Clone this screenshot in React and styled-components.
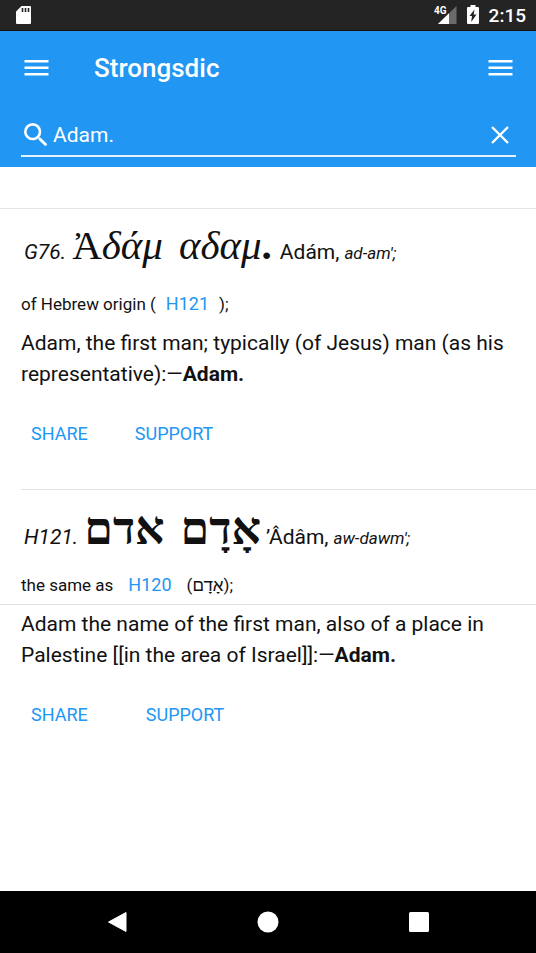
import React, { useState } from "react";
import styled, { createGlobalStyle } from "styled-components";

const BLUE = "#2196f3";
const INK = "#111";

const GlobalStyle = createGlobalStyle`
  * { box-sizing: border-box; }
  body { margin: 0; background: #fff; color: ${INK}; font-family: Roboto, sans-serif; }
  button, input { font-family: inherit; }
`;

const Screen = styled.div`
  display: flex;
  flex-direction: column;
  min-height: 100vh;
`;

const StatusBar = styled.div`
  display: flex;
  align-items: center;
  justify-content: space-between;
  height: 31px;
  padding: 0 10px 0 15px;
  background: #242424;
  border-bottom: 1px solid #1a1210;
  color: #fff;
`;

const StatusGroup = styled.div`
  display: flex;
  align-items: center;
  gap: 10px;
`;

const Clock = styled.time`
  font-size: 19px;
  font-weight: 500;
  line-height: 31px;
`;

const Header = styled.header`
  background: ${BLUE};
  color: #fff;
  padding-bottom: 10px;
`;

const Toolbar = styled.div`
  display: flex;
  align-items: center;
  height: 74px;
  padding: 0 23px 0 24px;
`;

const Title = styled.h1`
  flex: 1;
  margin: 0 0 0 45px;
  font-size: 26px;
  font-weight: 500;
  line-height: 32px;
`;

const IconButton = styled.button`
  display: flex;
  padding: 0;
  border: 0;
  background: none;
  color: inherit;
  cursor: pointer;
`;

const SearchField = styled.label`
  display: flex;
  align-items: center;
  height: 52px;
  margin: 0 20px 0 21px;
  padding: 10px 6px 0 3px;
  border-bottom: 2px solid #e4f2fe;
`;

const SearchInput = styled.input`
  flex: 1;
  min-width: 0;
  margin-left: 5px;
  padding: 0;
  border: 0;
  outline: 0;
  background: none;
  color: #fff;
  font-size: 21px;
  line-height: 32px;
`;

const Results = styled.main`
  flex: 1;
  margin-top: 41px;
  border-top: 1px solid #e6e6e6;
`;

const Entry = styled.article`
  padding-bottom: 32px;

  & + & { position: relative; }
  & + &::before {
    content: "";
    position: absolute;
    inset: 0 0 auto 21px;
    border-top: 1px solid #e2e2e2;
  }
`;

const HeadLine = styled.h2`
  display: flex;
  align-items: baseline;
  height: ${({ $script }) => ($script === "hebrew" ? 81 : 80)}px;
  margin: 0;
  padding: ${({ $script }) => ($script === "hebrew" ? 9 : 6)}px 20px 0 24px;
  font-size: 21px;
  font-weight: 400;
  line-height: 60px;
  white-space: nowrap;
`;

const Code = styled.em`
  margin-right: 6px;
`;

const GreekWords = styled.span`
  display: flex;
  align-items: baseline;
  gap: 16px;
  margin-right: 8px;
  font: italic 41px/60px "Liberation Serif", serif;
`;

const Capital = styled.span`
  font-style: normal;
`;

const Stop = styled.b`
  font-style: normal;
`;

const HebrewWords = styled.span`
  display: flex;
  gap: 16px;
  margin-right: 5px;
  font: bold 46px/62px "Liberation Serif", serif;
`;

const Pronunciation = styled.em`
  margin-left: 5px;
  font-size: 17px;
`;

const Origin = styled.p`
  height: 35px;
  margin: 0 0 4px;
  padding: 0 21px;
  border-bottom: 1px solid ${({ $ruled }) => ($ruled ? "#e2e2e2" : "transparent")};
  font-size: 17px;
  line-height: 30px;
`;

const Reference = styled.a`
  margin: 0 ${({ $gap }) => $gap}px;
  color: ${BLUE};
  font-size: 18px;
  text-decoration: none;
`;

const Definition = styled.p`
  margin: 0;
  padding: 0 21px;
  font-size: 21px;
  line-height: 31px;
`;

const Actions = styled.div`
  display: flex;
  gap: ${({ $gap }) => $gap}px;
  margin-top: 19px;
  padding: 0 31px;
`;

const ActionButton = styled.button`
  height: 48px;
  padding: 0;
  border: 0;
  background: none;
  color: ${BLUE};
  font-size: 18px;
  cursor: pointer;
`;

const NavBar = styled.nav`
  display: grid;
  grid-template-columns: repeat(3, 151px);
  justify-content: center;
  justify-items: center;
  align-items: center;
  height: 62px;
  background: #000;
  color: #fff;
`;

const MenuIcon = () => (
  <svg width="25" height="18" viewBox="0 0 25 18" fill="currentColor" aria-hidden="true">
    <path d="M0.500 1h24v2.500h-24zM0.500 7.500h24V10h-24zM0.500 14h24v2.500h-24z" />
  </svg>
);

const SearchIcon = () => (
  <svg width="24" height="24" viewBox="3 3 18 18" fill="currentColor" aria-hidden="true">
    <path d="M15.500 14h-.79l-.28-.27A6.471 6.471 0 0 0 16 9.500 6.500 6.500 0 1 0 9.500 16c1.610 0 3.090-.59 4.230-1.570l.27.28v.79l5 4.990L20.490 19l-4.990-5zm-6 0C7.010 14 5 11.990 5 9.500S7.010 5 9.500 5 14 7.010 14 9.500 11.990 14 9.500 14z" />
  </svg>
);

const CloseIcon = () => (
  <svg width="20" height="20" viewBox="0 0 20 20" aria-hidden="true">
    <path d="M2 2l16 16M18 2L2 18" stroke="currentColor" strokeWidth="2.400" />
  </svg>
);

const CardIcon = () => (
  <svg width="17" height="20" viewBox="0 0 17 20" aria-hidden="true">
    <path d="M6.500 1H15q1 0 1 1v16q0 1-1 1H2q-1 0-1-1V6.500z" fill="#fff" />
    <path d="M7.500 3v4M10.500 3v4M13.500 3v4" stroke="#242424" strokeWidth="1.600" />
  </svg>
);

const SignalIcon = () => (
  <svg width="23" height="20" viewBox="0 0 23 20" aria-hidden="true">
    <path d="M22.500 1v18H4z" fill="#6a6a6a" />
    <path d="M15 8.300V19H4z" fill="#fff" />
    <text x="0" y="9" fill="#fff" fontFamily="Roboto, sans-serif" fontSize="10" fontWeight="700">4G</text>
  </svg>
);

const BatteryIcon = () => (
  <svg width="12" height="20" viewBox="0 0 12 20" aria-hidden="true">
    <path d="M3.500 0h5v2H11q1 0 1 1v15q0 1-1 1H1q-1 0-1-1V3q0-1 1-1h2.500z" fill="#fff" />
    <path d="M7.500 4.500L2.500 11H5l-.8 6L9.500 9.500H6.700z" fill="#242424" />
  </svg>
);

export default function App() {
  const [query, setQuery] = useState("Adam.");

  return (
    <Screen>
      <GlobalStyle />
      <StatusBar>
        <CardIcon />
        <StatusGroup>
          <SignalIcon />
          <BatteryIcon />
          <Clock>2:15</Clock>
        </StatusGroup>
      </StatusBar>

      <Header>
        <Toolbar>
          <IconButton aria-label="Open navigation"><MenuIcon /></IconButton>
          <Title>Strongsdic</Title>
          <IconButton aria-label="Options"><MenuIcon /></IconButton>
        </Toolbar>
        <SearchField>
          <SearchIcon />
          <SearchInput aria-label="Search" value={query} onChange={(e) => setQuery(e.target.value)} />
          <IconButton type="button" aria-label="Clear" onClick={() => setQuery("")}><CloseIcon /></IconButton>
        </SearchField>
      </Header>

      <Results>
        <Entry>
          <HeadLine $script="greek">
            <Code>G76.</Code>
            <GreekWords lang="grc">
              <span><Capital>Ἀ</Capital>δάμ</span>
              <span>αδαμ<Stop>.</Stop></span>
            </GreekWords>
            <span>Adám,</span>
            <Pronunciation>ad-am';</Pronunciation>
          </HeadLine>
          <Origin>
            of Hebrew origin (<Reference href="#H121" $gap={10}>H121</Reference>);
          </Origin>
          <Definition>
            Adam, the first man; typically (of Jesus) man (as his representative):—<b>Adam.</b>
          </Definition>
          <Actions $gap={47}>
            <ActionButton>SHARE</ActionButton>
            <ActionButton>SUPPORT</ActionButton>
          </Actions>
        </Entry>

        <Entry id="H121">
          <HeadLine $script="hebrew">
            <Code>H121.</Code>
            <HebrewWords lang="he" dir="rtl">
              <span>אָדָם</span>
              <span>אדם</span>
            </HebrewWords>
            <span>ʼÂdâm,</span>
            <Pronunciation>aw-dawm';</Pronunciation>
          </HeadLine>
          <Origin $ruled>
            the same as<Reference href="#H120" $gap={15}>H120</Reference>(<bdi lang="he">אָדָם</bdi>);
          </Origin>
          <Definition>
            Adam the name of the first man, also of a place in Palestine [[in the area of Israel]]:—<b>Adam.</b>
          </Definition>
          <Actions $gap={58}>
            <ActionButton>SHARE</ActionButton>
            <ActionButton>SUPPORT</ActionButton>
          </Actions>
        </Entry>
      </Results>

      <NavBar aria-label="System">
        <IconButton aria-label="Back">
          <svg width="20" height="22" viewBox="0 0 20 22"><path d="M19 1.500v19L1.500 11z" fill="#fff" stroke="#fff" strokeLinejoin="round" /></svg>
        </IconButton>
        <IconButton aria-label="Home">
          <svg width="22" height="22" viewBox="0 0 22 22"><circle cx="11" cy="11" r="10.500" fill="#fff" /></svg>
        </IconButton>
        <IconButton aria-label="Recent apps">
          <svg width="20" height="20" viewBox="0 0 20 20"><rect width="20" height="20" rx="1.500" fill="#fff" /></svg>
        </IconButton>
      </NavBar>
    </Screen>
  );
}
